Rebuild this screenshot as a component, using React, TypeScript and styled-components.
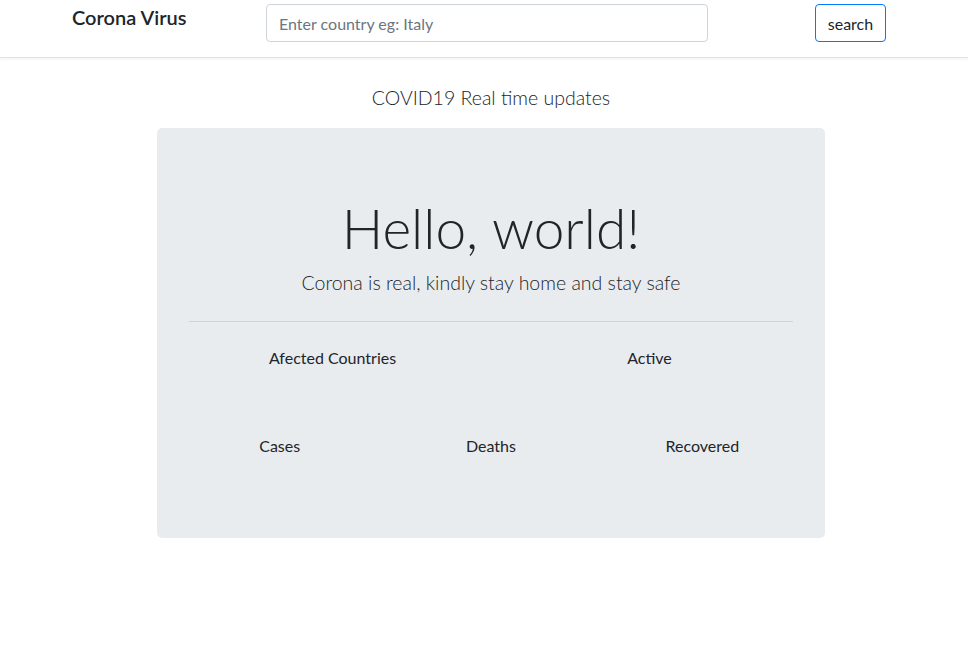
import React from 'react'
import styled, { createGlobalStyle } from 'styled-components'

const GlobalStyle = createGlobalStyle`
  body {
    margin: 0;
    background: #fff;
    font-family: "Segoe UI", Lato, "Open Sans", sans-serif;
    color: #212529;
  }
`

const Navbar = styled.nav`
  display: flex;
  align-items: flex-start;
  height: 58px;
  box-sizing: border-box;
  padding: 4px 0 0 72px;
  border-bottom: 1px solid #e3e3e3;
  box-shadow: 0 1px 3px rgba(0, 0, 0, 0.06);
`

const Brand = styled.a`
  width: 194px;
  font-size: 20px;
  font-weight: 600;
  line-height: 26px;
  color: #212529;
  text-decoration: none;
`

const SearchInput = styled.input`
  width: 442px;
  height: 38px;
  box-sizing: border-box;
  padding: 6px 12px;
  font-family: inherit;
  font-size: 16px;
  color: #495057;
  border: 1px solid #ced4da;
  border-radius: 4px;
  outline: none;
  &::placeholder { color: #6c757d; }
`

const SearchButton = styled.button`
  width: 71px;
  height: 38px;
  margin-left: 107px;
  box-sizing: border-box;
  font-family: inherit;
  font-size: 16px;
  color: #212529;
  background: transparent;
  border: 1px solid #007bff;
  border-radius: 4px;
  padding: 0;
`

const Main = styled.main`
  display: flex;
  flex-direction: column;
  align-items: center;
  padding-left: 14px;
`

const Lead = styled.p<{ top?: number }>`
  margin: ${p => p.top ?? 0}px 0 0;
  font-size: 19.5px;
  font-weight: 300;
  line-height: 30px;
  color: #212529;
`

const Jumbotron = styled.section`
  width: 668px;
  box-sizing: border-box;
  margin-top: 15px;
  padding: 62px 32px 65px;
  background: #e9ecef;
  border-radius: 5px;
  text-align: center;
`

const Display = styled.h1`
  margin: 0 0 2px;
  font-size: 55px;
  font-weight: 300;
  line-height: 76px;
`

const Rule = styled.hr`
  margin: 23px 0 16px;
  border: 0;
  border-top: 1px solid rgba(0, 0, 0, 0.1);
`

const StatsGrid = styled.div`
  display: grid;
  row-gap: 41px;
  margin: 0 -15px;
`

const StatRow = styled.div<{ cols: number }>`
  display: grid;
  grid-template-columns: repeat(${p => p.cols}, 1fr);
`

const Stat = styled.div`
  padding: 8px 15px 15px;
  font-size: 16px;
  line-height: 24px;
`

const App = () => (
  <>
    <GlobalStyle />
    <Navbar>
      <Brand href="#">Corona Virus</Brand>
      <SearchInput placeholder="Enter country eg: Italy" />
      <SearchButton>search</SearchButton>
    </Navbar>
    <Main>
      <Lead top={25}>COVID19 Real time updates</Lead>
      <Jumbotron>
        <Display>Hello, world!</Display>
        <Lead>Corona is real, kindly stay home and stay safe</Lead>
        <Rule />
        <StatsGrid>
          <StatRow cols={2}>
            <Stat>Afected Countries</Stat>
            <Stat>Active</Stat>
          </StatRow>
          <StatRow cols={3}>
            <Stat>Cases</Stat>
            <Stat>Deaths</Stat>
            <Stat>Recovered</Stat>
          </StatRow>
        </StatsGrid>
      </Jumbotron>
    </Main>
  </>
)

export default App
